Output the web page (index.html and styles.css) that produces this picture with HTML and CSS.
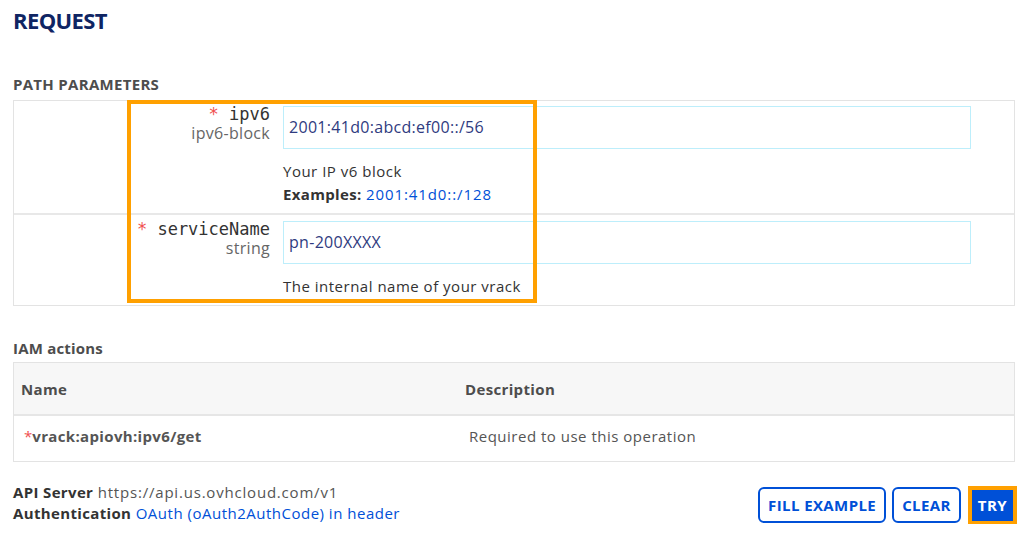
FILE: index.html
```html
<!DOCTYPE html>
<html lang="en">
<head>
<meta charset="utf-8">
<title>Request</title>
<link rel="stylesheet" href="styles.css">
</head>
<body>
<div class="page">
  <h1 class="title">REQUEST</h1>

  <h2 class="section">PATH PARAMETERS</h2>
  <div class="params">
    <div class="param">
      <div class="p-empty"></div>
      <div class="p-label">
        <div class="p-name"><span class="req">*</span> ipv6</div>
        <div class="p-type">ipv6-block</div>
      </div>
      <div class="p-value">
        <div class="input">2001:41d0:abcd:ef00::/56</div>
        <div class="p-desc">
          <div>Your IP v6 block</div>
          <div><b>Examples:</b> <span class="link">2001:41d0::/128</span></div>
        </div>
      </div>
    </div>
    <div class="param">
      <div class="p-empty"></div>
      <div class="p-label">
        <div class="p-name"><span class="req">*</span> serviceName</div>
        <div class="p-type">string</div>
      </div>
      <div class="p-value">
        <div class="input">pn-200XXXX</div>
        <div class="p-desc">
          <div>The internal name of your vrack</div>
        </div>
      </div>
    </div>
    <div class="highlight"></div>
  </div>

  <h3 class="sub">IAM actions</h3>
  <div class="iam">
    <div class="iam-head">
      <div class="c1">Name</div>
      <div class="c2">Description</div>
    </div>
    <div class="iam-row">
      <div class="c1"><span class="req">*</span><b>vrack:apiovh:ipv6/get</b></div>
      <div class="c2">Required to use this operation</div>
    </div>
  </div>

  <div class="footer">
    <div class="meta">
      <div><b>API Server</b> <span class="url">https://api.us.ovhcloud.com/v1</span></div>
      <div><b>Authentication</b> <span class="link">OAuth (oAuth2AuthCode) in header</span></div>
    </div>
    <div class="buttons">
      <button class="btn">FILL EXAMPLE</button>
      <button class="btn">CLEAR</button>
      <button class="btn primary">TRY</button>
    </div>
  </div>
</div>
</body>
</html>
```
FILE: styles.css
```css
* { box-sizing: border-box; }
html, body { margin: 0; padding: 0; background: #fff; }
body {
  font-family: "Open Sans", "Noto Sans", sans-serif;
  font-size: 15px;
  letter-spacing: 0.5px;
  color: #4d4d4d;
}
b { letter-spacing: 0.35px; }
.page { padding: 0 9px 0 13px; }

.title {
  margin: 0;
  padding-top: 6px;
  height: 34px;
  font-size: 22px;
  font-weight: 700;
  letter-spacing: -0.6px;
  color: #0f2563;
  line-height: 28px;
}
.section {
  margin: 34px 0 0;
  font-size: 15px;
  font-weight: 700;
  letter-spacing: 0.3px;
  line-height: 32px;
  color: #4d4d4d;
}
.params {
  position: relative;
  border: 1px solid #e3e3e3;
}
.param {
  display: flex;
  padding: 5px 0 7px;
}
.param + .param { border-top: 2px solid #e8e8e8; padding-top: 6px; }
.p-empty { width: 117px; }
.p-label {
  width: 139px;
  text-align: right;
  margin-top: -2px;
}
.p-name {
  font-family: "DejaVu Sans Mono", monospace;
  font-size: 17px;
  letter-spacing: 0;
  line-height: 20px;
  color: #333;
}
.p-type { font-size: 16px; letter-spacing: 0.3px; line-height: 18px; color: #666; }
.req { color: #f05050; letter-spacing: 0; }
.p-value { margin-left: 13px; width: 688px; }
.input {
  height: 43px;
  border: 1px solid #bdeefb;
  padding: 0 5px;
  line-height: 41px;
  color: #2f3b80;
  font-size: 16px;
  letter-spacing: 0.3px;
}
.p-desc { margin-top: 11px; line-height: 23px; color: #333; }
.p-desc b { color: #333; }
.link { color: #0050d7; }
.p-desc .link { letter-spacing: 0.9px; }
.url { color: #555; letter-spacing: 0.8px; }
.highlight {
  position: absolute;
  left: 113px;
  top: -1px;
  width: 410px;
  height: 203px;
  border: 4px solid #ffa000;
  pointer-events: none;
}

.sub {
  margin: 31px 0 0;
  font-size: 15px;
  font-weight: 700;
  letter-spacing: 0.2px;
  line-height: 22px;
  color: #4d4d4d;
}
.iam { margin-top: 3px; border: 1px solid #e3e3e3; }
.iam-head {
  display: flex;
  background: #f7f7f7;
  height: 53px;
  align-items: center;
  border-bottom: 2px solid #e6e6e6;
  font-weight: 700;
  letter-spacing: 0.35px;
}
.iam-head .c1 { width: 444px; padding-left: 7px; }
.iam-head .c2 { padding-left: 7px; }
.iam-row {
  display: flex;
  height: 45px;
  padding-bottom: 5px;
  align-items: center;
  color: #555;
}
.iam-row .c1 { width: 444px; padding-left: 10px; }
.iam-row .c2 { padding-left: 11px; }

.footer {
  display: flex;
  justify-content: space-between;
  align-items: center;
  margin-top: 20px;
}
.meta { line-height: 21px; color: #4d4d4d; }
.meta b { color: #333; }
.buttons { display: flex; align-items: center; padding-right: 2px; padding-top: 4px; }
.btn {
  font-family: "Open Sans", "Noto Sans", sans-serif;
  font-size: 15px;
  font-weight: 700;
  letter-spacing: 0.4px;
  color: #0050d7;
  background: #fff;
  border: 2px solid #0050d7;
  border-radius: 6px;
  height: 36px;
  padding: 0 8px;
  margin-left: 6px;
}
.btn.primary {
  background: #0050d7;
  color: #fff;
  border-radius: 0;
  height: 31px;
  padding: 0 4px;
  outline: 4px solid #ffa000;
  margin-left: 11px;
}
```
